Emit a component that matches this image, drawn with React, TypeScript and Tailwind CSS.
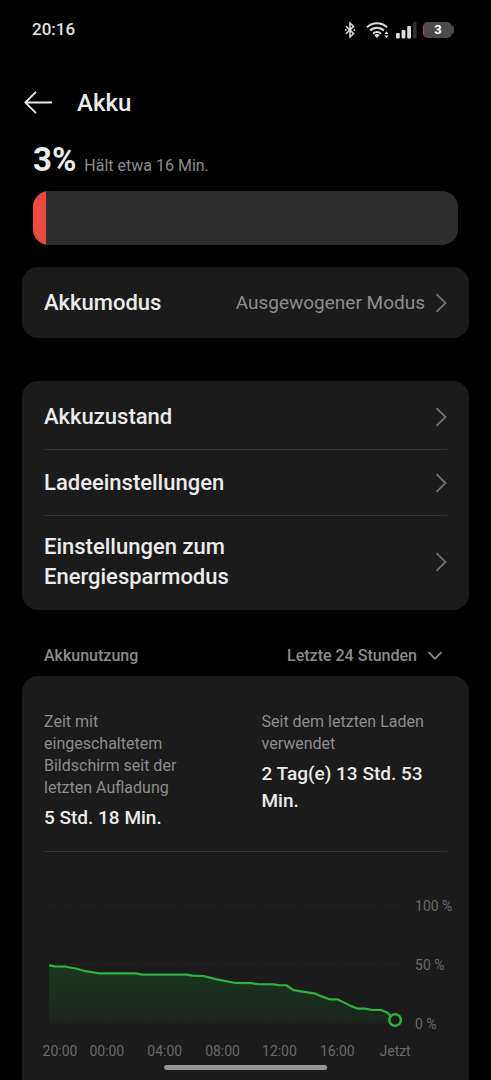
interface SettingsLink {
  label: string;
  href: string;
}

const settingsLinks: SettingsLink[] = [
  { label: "Akkuzustand", href: "#akkuzustand" },
  { label: "Ladeeinstellungen", href: "#ladeeinstellungen" },
  { label: "Einstellungen zum Energiesparmodus", href: "#energiesparmodus" },
];

const batteryLevel = 3;

const usageLine =
  "5,113.5 11,114.7 22,115 33,117 42,119.5 55,121.7 92,121.7 99,123 143,123 149,124 160,124.3 172,127.5 192,131.3 208,131.4 214,132.5 230,132.7 236,133.6 243,133.6 250,138.4 272,142 279,145 286,147.7 294,147.7 301,151 308,154.5 314,157 322,157 329,158.4 338,158.4 344,161 348,164.5";

const gridLines = [
  { y: 53, label: "100 %" },
  { y: 112, label: "50 %" },
  { y: 171, label: "0 %" },
];

const timeLabels = [
  { x: 16, label: "20:00" },
  { x: 63, label: "00:00" },
  { x: 121, label: "04:00" },
  { x: 179, label: "08:00" },
  { x: 236, label: "12:00" },
  { x: 294, label: "16:00" },
  { x: 352, label: "Jetzt" },
];

function BluetoothIcon() {
  return (
    <svg width="12" height="18" viewBox="0 0 12 18" fill="none" stroke="#dcdcdc" strokeWidth="1.5" className="mr-1" aria-hidden="true">
      <path d="M2 5.2 9.6 12.6 6 16V2l3.6 3.4L2 12.8" />
      <circle cx="1.8" cy="9" r="0.9" fill="#dcdcdc" stroke="none" />
      <circle cx="10.4" cy="9" r="0.9" fill="#dcdcdc" stroke="none" />
    </svg>
  );
}

function WifiIcon() {
  return (
    <svg width="24" height="18" viewBox="0 0 24 18" fill="none" aria-hidden="true">
      <g stroke="#dcdcdc" strokeWidth="2">
        <path d="M1 6.2a14.4 14.4 0 0 1 20 0" />
        <path d="M4 9.5a10 10 0 0 1 14 0" />
        <path d="M7 12.7a5.8 5.8 0 0 1 8 0" />
      </g>
      <path d="M8.3 14.3a3.9 3.9 0 0 1 5.4 0L11 17z" fill="#dcdcdc" />
      <path d="M20.5 10.3l2 2.7h-4zM20.5 17l2-2.5h-4z" fill="#dcdcdc" />
    </svg>
  );
}

function SignalIcon() {
  return (
    <svg width="21" height="18" viewBox="0 0 21 18" fill="#dcdcdc" aria-hidden="true">
      <rect x="0" y="12" width="3.8" height="5.4" rx="0.8" />
      <rect x="5.6" y="9" width="3.8" height="8.4" rx="0.8" />
      <rect x="11.2" y="5" width="3.8" height="12.4" rx="0.8" />
      <rect x="17" y="1" width="3.6" height="16.4" rx="0.8" fill="#303030" />
    </svg>
  );
}

function ChevronRightIcon() {
  return (
    <svg width="12" height="20" viewBox="0 0 12 20" fill="none" stroke="#707070" strokeWidth="1.8" className="shrink-0" aria-hidden="true">
      <path d="M1.5 1.2 10.5 10l-9 8.8" />
    </svg>
  );
}

function StatusBar() {
  return (
    <div className="flex h-[60px] items-center justify-between pr-[37px] pl-8">
      <span className="text-[17px] font-medium text-[#e0e0e0]">20:16</span>
      <div className="flex items-center gap-1.5">
        <BluetoothIcon />
        <WifiIcon />
        <SignalIcon />
        <div className="flex items-center">
          <span className="flex h-4 w-[29px] items-center justify-center rounded-[5px] border-l border-[#b04a45] bg-[#4b4b4b] text-[13px] font-bold text-white">
            {batteryLevel}
          </span>
          <span className="h-2 w-0.5 rounded-r bg-[#4b4b4b]" />
        </div>
      </div>
    </div>
  );
}

function UsageChart() {
  return (
    <svg viewBox="0 0 404 212" className="block w-full overflow-visible" role="img" aria-label="Akkunutzung">
      <defs>
        <linearGradient id="usage-fill" x1="0" y1="0" x2="0" y2="1">
          <stop offset="0" stopColor="#1f9a35" stopOpacity="0.22" />
          <stop offset="1" stopColor="#1f9a35" stopOpacity="0.07" />
        </linearGradient>
      </defs>
      {gridLines.map((line) => (
        <g key={line.label}>
          <line x1="0" x2="358" y1={line.y + 0.5} y2={line.y + 0.5} stroke="#262626" strokeDasharray="3 2" />
          <text x="372" y={line.y + 6} fontSize="14" fill="#6a6a6a">
            {line.label}
          </text>
        </g>
      ))}
      <polygon points={`5,171 ${usageLine} 348,171`} fill="url(#usage-fill)" />
      <polyline points={usageLine} fill="none" stroke="#31b044" strokeWidth="2.2" strokeLinejoin="round" />
      <circle cx="352" cy="168.4" r="5.8" fill="#1b1b1b" stroke="#31b044" strokeWidth="2.5" />
      {timeLabels.map((time) => (
        <text key={time.label} x={time.x} y="205" fontSize="14" textAnchor="middle" fill="#6a6a6a">
          {time.label}
        </text>
      ))}
    </svg>
  );
}

export default function App() {
  return (
    <div className="flex min-h-screen flex-col bg-black font-['Roboto',sans-serif] text-[#ebebeb]">
      <StatusBar />

      <header className="flex h-[76px] items-center gap-6 px-6 pt-2.5">
        <button type="button" aria-label="Zurück" className="shrink-0">
          <svg width="29" height="24" viewBox="0 0 29 24" fill="none" stroke="#ebebeb" strokeWidth="1.8">
            <path d="M28 11.5H1.5M12 .8 1.2 11.5 12 22.2" />
          </svg>
        </button>
        <h1 className="text-2xl font-medium">Akku</h1>
      </header>

      <main className="flex flex-1 flex-col px-[22px]">
        <section className="px-[11px]">
          <div className="flex h-[55px] items-baseline gap-2 pt-1">
            <span className="text-[33px] leading-10 font-bold">{batteryLevel}%</span>
            <span className="text-base text-[#8c8c8c]">Hält etwa 16 Min.</span>
          </div>
          <div className="h-[54px] overflow-hidden rounded-2xl bg-[#2e2e2e]">
            <div className="h-full bg-[#ec4a40]" style={{ width: `${batteryLevel}%` }} />
          </div>
        </section>

        <a
          href="#akkumodus"
          className="mt-[22px] flex h-[71px] items-center rounded-2xl bg-[#1b1b1b] px-[22px]"
        >
          <span className="flex-1 text-[22px] font-medium">Akkumodus</span>
          <span className="mr-2.5 text-[19px] leading-[30px] text-[#8c8c8c]">Ausgewogener Modus</span>
          <ChevronRightIcon />
        </a>

        <nav className="mt-[43px] rounded-2xl bg-[#1b1b1b] px-[22px] py-[3px]">
          {settingsLinks.map((link) => (
            <a
              key={link.href}
              href={link.href}
              className="flex min-h-[66px] items-center justify-between border-b border-[#323232] last:min-h-[91px] last:border-b-0"
            >
              <span className="max-w-[220px] text-[22px] leading-[30px] font-medium">{link.label}</span>
              <ChevronRightIcon />
            </a>
          ))}
        </nav>

        <div className="flex h-[66px] items-center justify-between px-[22px] pt-[26px] text-base font-medium text-[#8c8c8c]">
          <h2>Akkunutzung</h2>
          <label className="flex items-center gap-2.5 pr-1">
            <select
              aria-label="Zeitraum"
              defaultValue="24h"
              className="field-sizing-content appearance-none bg-transparent"
            >
              <option value="24h">Letzte 24 Stunden</option>
            </select>
            <svg width="16" height="10" viewBox="0 0 16 10" fill="none" stroke="#8c8c8c" strokeWidth="1.8" aria-hidden="true">
              <path d="M1.5 1.2 8 7.7l6.5-6.5" />
            </svg>
          </label>
        </div>

        <section className="flex-1 rounded-t-2xl bg-[#1b1b1b] px-[22px] pt-[35px]">
          <div className="grid grid-cols-2 gap-8 border-b border-[#323232] pb-5">
            <div>
              <p className="max-w-[150px] leading-[22px] text-[#8c8c8c]">
                Zeit mit eingeschaltetem Bildschirm seit der letzten Aufladung
              </p>
              <p className="mt-[5px] text-[19px] leading-[27px] font-medium">5 Std. 18 Min.</p>
            </div>
            <div>
              <p className="leading-[22px] text-[#8c8c8c]">Seit dem letzten Laden verwendet</p>
              <p className="mt-[5px] text-[19px] leading-[27px] font-medium">2 Tag(e) 13 Std. 53 Min.</p>
            </div>
          </div>
          <UsageChart />
        </section>
      </main>

      <div className="fixed bottom-2.5 left-1/2 h-[5px] w-1/3 -translate-x-1/2 rounded-full bg-[#959595]" />
    </div>
  );
}
